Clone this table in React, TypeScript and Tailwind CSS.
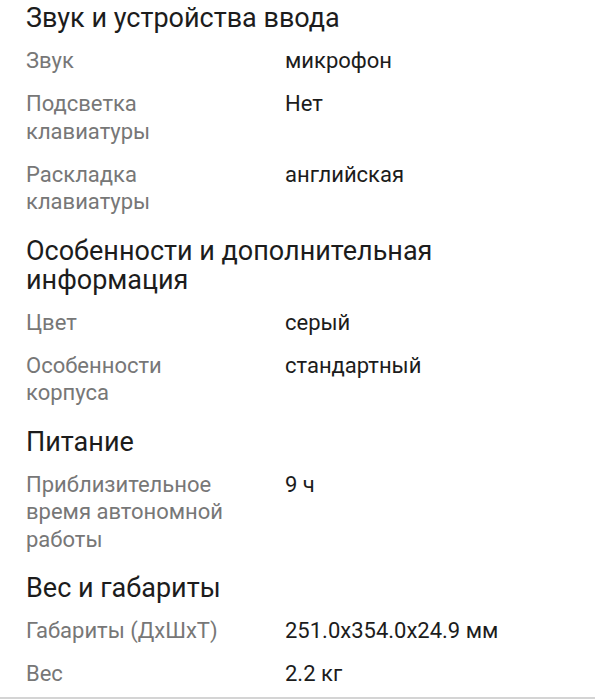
import React from 'react';

type Row = { label: string; value: string };
type Section = { title: string; rows: Row[] };

const sections: Section[] = [
  {
    title: 'Звук и устройства ввода',
    rows: [
      { label: 'Звук', value: 'микрофон' },
      { label: 'Подсветка клавиатуры', value: 'Нет' },
      { label: 'Раскладка клавиатуры', value: 'английская' },
    ],
  },
  {
    title: 'Особенности и дополнительная информация',
    rows: [
      { label: 'Цвет', value: 'серый' },
      { label: 'Особенности корпуса', value: 'стандартный' },
    ],
  },
  {
    title: 'Питание',
    rows: [{ label: 'Приблизительное время автономной работы', value: '9 ч' }],
  },
  {
    title: 'Вес и габариты',
    rows: [
      { label: 'Габариты (ДхШхТ)', value: '251.0x354.0x24.9 мм' },
      { label: 'Вес', value: '2.2 кг' },
    ],
  },
];

const App: React.FC = () => {
  return (
    <div className="w-[595px] h-[699px] bg-white overflow-hidden font-['Roboto',sans-serif] border-b-2 border-[#d4d4d4]">
      <div className="flex flex-col gap-[21px] pl-[26px] pr-6 pt-[4px]">
        {sections.map((section) => (
          <section key={section.title} className="flex flex-col gap-[14px]">
            <h2 className="text-[27px] leading-[29px] text-[#1c1c1c] w-[440px]">{section.title}</h2>
            <div className="flex flex-col gap-[15.5px]">
              {section.rows.map((row) => (
                <div key={row.label} className="flex text-[22px] leading-[27.5px]">
                  {/* label column wraps long names, value column starts at x=285 */}
                  <div className="w-[259px] shrink-0 pr-[45px] text-[#777777]">{row.label}</div>
                  <div className="text-[#1c1c1c]">{row.value}</div>
                </div>
              ))}
            </div>
          </section>
        ))}
      </div>
    </div>
  );
};

export default App;
